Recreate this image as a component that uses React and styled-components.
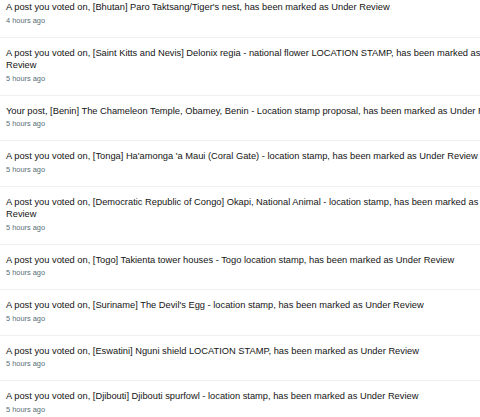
import React from "react";
import styled, { createGlobalStyle } from "styled-components";

const notifications = [
  {
    text: "A post you voted on, [Bhutan] Paro Taktsang/Tiger's nest, has been marked as Under Review",
    time: "4 hours ago",
  },
  {
    text: "A post you voted on, [Saint Kitts and Nevis] Delonix regia - national flower LOCATION STAMP, has been marked as Under Review",
    time: "5 hours ago",
  },
  {
    text: "Your post, [Benin] The Chameleon Temple, Obamey, Benin - Location stamp proposal, has been marked as Under Review",
    time: "5 hours ago",
  },
  {
    text: "A post you voted on, [Tonga] Ha'amonga 'a Maui (Coral Gate) - location stamp, has been marked as Under Review",
    time: "5 hours ago",
  },
  {
    text: "A post you voted on, [Democratic Republic of Congo] Okapi, National Animal - location stamp, has been marked as Under Review",
    time: "5 hours ago",
  },
  {
    text: "A post you voted on, [Togo] Takienta tower houses - Togo location stamp, has been marked as Under Review",
    time: "5 hours ago",
  },
  {
    text: "A post you voted on, [Suriname] The Devil's Egg - location stamp, has been marked as Under Review",
    time: "5 hours ago",
  },
  {
    text: "A post you voted on, [Eswatini] Nguni shield LOCATION STAMP, has been marked as Under Review",
    time: "5 hours ago",
  },
  {
    text: "A post you voted on, [Djibouti] Djibouti spurfowl - location stamp, has been marked as Under Review",
    time: "5 hours ago",
  },
];

const GlobalStyle = createGlobalStyle`
  html, body {
    margin: 0;
    padding: 0;
    background: #ffffff;
    overflow: hidden;
  }
  body {
    font-family: "Liberation Sans", Arial, sans-serif;
  }
`;

const List = styled.ul`
  list-style: none;
  margin: -8px 0 0 0;
  padding: 0;
  width: 525px;
`;

const Item = styled.li`
  padding: 9px 6px 10px;
  border-bottom: 1px solid #edeff1;
`;

const Message = styled.div`
  font-size: 9.3px;
  line-height: 12.5px;
  color: #141414;
`;

const Time = styled.div`
  margin-top: 1px;
  font-size: 7.4px;
  line-height: 12px;
  color: #576f76;
`;

const App = () => {
  return (
    <>
      <GlobalStyle />
      <List>
        {notifications.map((n, i) => (
          <Item key={i}>
            <Message>{n.text}</Message>
            <Time>{n.time}</Time>
          </Item>
        ))}
      </List>
    </>
  );
};

export default App;
